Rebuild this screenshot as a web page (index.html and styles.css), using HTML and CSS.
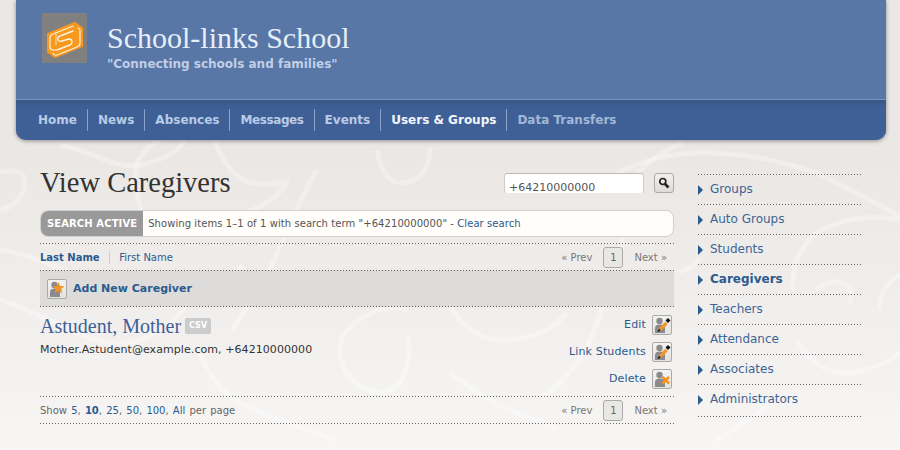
FILE: index.html
```html
<!DOCTYPE html>
<html lang="en">
    <head>
        <meta charset="UTF-8">
        <title>View Caregivers</title>
        <link rel="stylesheet" href="styles.css">
    </head>
    <body>
        <svg class="swirls" width="900" height="450" viewBox="0 0 900 450" fill="none" stroke="#fff" stroke-opacity="0.32" stroke-width="5">
            <path d="M0 172c15 -3 25 0 25 10c0 14 -12 26 -25 28"/>
            <path d="M60 145c30 5 55 25 80 20c25 -5 40 -15 45 -25"/>
            <path d="M160 140c-15 8 -25 20 -25 35c0 25 12 40 5 60"/>
            <path d="M215 142c10 25 25 42 45 42c15 0 28 -2 28 -4c-10 20 -30 30 -75 45"/>
            <path d="M317 170c-15 25 -30 60 -45 95c-15 30 -30 50 -40 65"/>
            <path d="M377 150c3 20 10 33 25 33c18 0 28 -15 28 -35"/>
            <path d="M0 250c40 5 80 30 133 50c40 15 85 5 110 -35"/>
            <path d="M0 300c40 12 70 35 105 42c30 5 60 -8 80 -35"/>
            <path d="M200 353c8 20 20 40 40 50c30 15 65 25 95 37"/>
            <path d="M408 310c-22 -8 -48 5 -65 25c-10 25 5 50 30 57c25 5 40 -20 35 -55"/>
            <path d="M450 307c15 22 30 33 55 33c28 0 50 -12 62 -27"/>
            <path d="M623 237c-10 35 -20 75 -33 103c-12 25 -30 45 -47 57"/>
            <path d="M450 373c20 15 40 30 67 40c15 5 30 10 40 17"/>
            <path d="M617 173c30 -15 65 -22 100 -20c35 2 70 10 100 20c30 15 60 30 83 44"/>
            <path d="M637 173c12 -12 28 -24 46 -30"/>
            <path d="M793 290c-2 -25 8 -45 24 -57c25 -15 55 -18 83 -13"/>
            <path d="M797 340c12 22 30 33 46 33c20 0 40 -8 57 -20"/>
            <path d="M817 290c8 -8 18 -10 26 -7c8 3 10 15 6 20"/>
            <path d="M880 310c-2 -15 8 -30 20 -35"/>
            <path d="M767 407c-18 12 -35 24 -50 33"/>
            <path d="M678 272c10 -2 18 -8 22 -14"/>
        </svg>
        <header class="banner">
            <div class="brand">
                <div class="logo">
                    <svg width="45" height="50" viewBox="0 0 45 50" fill="none" stroke-linejoin="round" stroke-linecap="round">
                        <rect width="45" height="50" fill="#808080" stroke="none"/>
                        <path d="M6 21l27 -11l7 5v18l-27 11l-7 -5z" fill="#f7981f" stroke="#f7981f" stroke-width="2"/>
                        <path d="M31 13l-20 8q-3 1 -3 4v9q0 3 3 3h3" stroke="#fff1da" stroke-width="1.2"/>
                        <path d="M36 15q2 0 2 3v12q0 3 -3 4l-20 8q-3 1 -4 -2" stroke="#fff1da" stroke-width="1.2"/>
                        <path d="M31 18l-13 5q-3 1 -2 4q1 2 4 1l7 -2q3 0 3 3q0 2 -2 3l-13 5" stroke="#fff1da" stroke-width="1.4"/>
                        <path d="M14 21v11" stroke="#fff1da" stroke-width="0.8"/>
                    </svg>
                </div>
                <div>
                    <h1 class="site-name">School-links School</h1>
                    <p class="motto">"Connecting schools and families"</p>
                </div>
            </div>
            <nav class="topnav">
                <a href="#">Home</a>
                <a href="#">News</a>
                <a href="#">Absences</a>
                <a href="#" class="tight">Messages</a>
                <a href="#">Events</a>
                <a href="#" class="current">Users &amp; Groups</a>
                <a href="#" class="dim">Data Transfers</a>
            </nav>
        </header>
        <div class="page">
            <main class="content">
                <div class="title-row">
                    <h2 class="page-title">View Caregivers</h2>
                    <form class="search">
                        <div class="search-input">+64210000000</div>
                        <div class="search-btn">
                            <svg width="12" height="12" viewBox="0 0 12 12" fill="none" stroke="#222">
                                <circle cx="4.800" cy="4.500" r="3" stroke-width="1.7"/>
                                <path d="M7 7l3.500 3.500" stroke-width="2.600"/>
                            </svg>
                        </div>
                    </form>
                </div>
                <div class="notice">
                    <span class="notice-label">SEARCH ACTIVE</span>
                    <span class="notice-text">Showing items 1–1 of 1 with search term "+64210000000" - <a href="#">Clear search</a></span>
                </div>
                <div class="listbar sortbar">
                    <div class="sort">
                        <a href="#" class="sort-on">Last Name</a>
                        <a href="#">First Name</a>
                    </div>
                    <div class="pager">
                        <span>« Prev</span>
                        <span class="page-num">1</span>
                        <span>Next »</span>
                    </div>
                </div>
                <div class="add-row">
                    <span class="icon-btn">
                        <svg width="18" height="18" viewBox="0 0 18 18">
                            <circle cx="6.500" cy="5" r="3.200" fill="#8b8b8b"/>
                            <path d="M2 17v-5c0 -2.500 2 -3.500 5 -3.500s5 1 5 3.500v5z" fill="#8b8b8b"/>
                            <path d="M10.500 2l1.700 4l4.300 .3l-3.300 2.800l1.100 4.200l-3.800 -2.300l-3.800 2.300l1.100 -4.200l-3.300 -2.800l4.300 -.3z" fill="#f29426"/>
                        </svg>
                    </span>
                    <a href="#">Add New Caregiver</a>
                </div>
                <article class="person">
                    <div class="person-main">
                        <div class="person-head">
                            <a href="#" class="person-name">Astudent, Mother</a>
                            <span class="csv">CSV</span>
                        </div>
                        <p class="person-info">Mother.Astudent@example.com, +64210000000</p>
                    </div>
                    <ul class="actions">
                        <li>
                            <a href="#">Edit</a>
                            <span class="icon-btn">
                                <svg width="18" height="18" viewBox="0 0 18 18">
                                    <circle cx="6.500" cy="5" r="3.200" fill="#8b8b8b"/>
                                    <path d="M2 17v-5c0 -2.500 2 -3.500 5 -3.500s5 1 5 3.500v5z" fill="#8b8b8b"/>
                                    <path d="M7 13.500l6.500 -6.500" stroke="#f29426" stroke-width="3.200"/>
                                    <path d="M5 15.500l2 -2" stroke="#111" stroke-width="1.500"/>
                                    <path d="M15 2l2.500 2.500l-2.500 2.500l-2.500 -2.500z" fill="#111"/>
                                </svg>
                            </span>
                        </li>
                        <li>
                            <a href="#">Link Students</a>
                            <span class="icon-btn">
                                <svg width="18" height="18" viewBox="0 0 18 18">
                                    <circle cx="6.500" cy="5" r="3.200" fill="#8b8b8b"/>
                                    <path d="M2 17v-5c0 -2.500 2 -3.500 5 -3.500s5 1 5 3.500v5z" fill="#8b8b8b"/>
                                    <path d="M7 13.500l6.500 -6.500" stroke="#f29426" stroke-width="3.200"/>
                                    <path d="M5 15.500l2 -2" stroke="#111" stroke-width="1.500"/>
                                    <path d="M15 2l2.500 2.500l-2.500 2.500l-2.500 -2.500z" fill="#111"/>
                                </svg>
                            </span>
                        </li>
                        <li>
                            <a href="#">Delete</a>
                            <span class="icon-btn">
                                <svg width="18" height="18" viewBox="0 0 18 18">
                                    <circle cx="6.500" cy="5" r="3.200" fill="#8b8b8b"/>
                                    <path d="M2 17v-5c0 -2.500 2 -3.500 5 -3.500s5 1 5 3.500v5z" fill="#8b8b8b"/>
                                    <path d="M9.500 7l6.500 6.500M16 7l-6.500 6.500" stroke="#f29426" stroke-width="2.600"/>
                                </svg>
                            </span>
                        </li>
                    </ul>
                </article>
                <div class="listbar footbar">
                    <div class="perpage">
                        Show <a href="#">5</a>, <a href="#" class="per-on">10</a>, <a href="#">25</a>, <a href="#">50</a>, <a href="#">100</a>, <a href="#">All</a> per page
                    </div>
                    <div class="pager">
                        <span>« Prev</span>
                        <span class="page-num">1</span>
                        <span>Next »</span>
                    </div>
                </div>
            </main>
            <aside class="sidebar">
                <a href="#">Groups</a>
                <a href="#">Auto Groups</a>
                <a href="#">Students</a>
                <a href="#" class="on">Caregivers</a>
                <a href="#">Teachers</a>
                <a href="#">Attendance</a>
                <a href="#">Associates</a>
                <a href="#" class="last">Administrators</a>
            </aside>
        </div>
    </body>
</html>
```

FILE: styles.css
```css
:root {
    --dots: linear-gradient(to right, #666 1px, transparent 1px);
}
body {
    margin: 0;
    height: 450px;
    overflow: hidden;
    position: relative;
    background: linear-gradient(#eae7e4 35%, #f7f6f5);
    font-family: "DejaVu Sans", sans-serif;
    font-size: 11px;
    color: #333;
}
a {
    color: #2b5a8e;
    text-decoration: none;
}
.swirls {
    position: absolute;
    left: 0;
    top: 0;
}
.banner {
    position: relative;
    margin: 0 14px 0 16px;
    height: 140px;
    border-radius: 0 0 10px 10px;
    box-shadow: 0 1px 4px rgba(0, 0, 0, 0.4);
    background: #5876a6;
    overflow: hidden;
}
.brand {
    display: flex;
    height: 100px;
    padding: 13px 0 0 26px;
    box-sizing: border-box;
    border-bottom: 1px solid #7a95bd;
}
.logo {
    margin-right: 20px;
    height: 50px;
}
.site-name {
    margin: 7px 0 0;
    font-family: "Liberation Serif", serif;
    font-weight: normal;
    font-size: 30px;
    line-height: 36px;
    color: #e6eef8;
}
.motto {
    margin: 0;
    font-weight: bold;
    font-size: 12px;
    line-height: 16px;
    color: #c0cfe6;
}
.topnav {
    display: flex;
    align-items: center;
    height: 40px;
    padding-left: 12px;
    box-sizing: border-box;
    background: linear-gradient(#375785, #3f6097 8px);
}
.topnav a {
    padding: 3px 10px;
    line-height: 16px;
    font-size: 12px;
    font-weight: bold;
    color: #b9cbe6;
    border-right: 1px solid #8ba3c7;
}
.topnav a:last-child {
    border-right: 0;
}
.topnav .tight {
    letter-spacing: -0.4px;
}
.topnav .current {
    color: #f2f6fb;
}
.topnav .dim {
    color: #a3b8d6;
}
.page {
    position: relative;
    display: flex;
    padding: 0 0 0 40px;
}
.content {
    width: 634px;
}
.title-row {
    display: flex;
    justify-content: space-between;
    height: 70px;
    box-sizing: border-box;
    padding-top: 33px;
}
.page-title {
    margin: 0;
    font-family: "Liberation Serif", serif;
    font-weight: normal;
    font-size: 28.5px;
    line-height: 20px;
    color: #333;
}
.search {
    display: flex;
    gap: 10px;
}
.search-input {
    width: 140px;
    height: 20px;
    box-sizing: border-box;
    padding: 6px 3px 0 4px;
    font-size: 11px;
    line-height: 16px;
    color: #555;
    background: #fff;
    border: 1px solid #ccc;
    border-bottom: 0;
    border-top-color: #bbb;
    border-radius: 3px;
    overflow: hidden;
}
.search-btn {
    display: flex;
    align-items: center;
    justify-content: center;
    width: 20px;
    height: 20px;
    box-sizing: border-box;
    background: linear-gradient(#f2f1ef, #dddbd8);
    border: 1px solid #aaa;
    border-radius: 3px;
}
.notice {
    display: flex;
    align-items: center;
    height: 27px;
    box-sizing: border-box;
    background: #fffefa;
    border: 1px solid #d0d0d0;
    border-radius: 8px;
    overflow: hidden;
}
.notice-label {
    align-self: stretch;
    display: flex;
    align-items: center;
    padding: 0 6px;
    font-weight: bold;
    font-size: 10px;
    letter-spacing: 0.1px;
    color: #fff;
    background: #999;
}
.notice-text {
    padding-left: 5px;
    font-size: 10px;
    letter-spacing: 0.07px;
    color: #555;
}
.listbar {
    display: flex;
    justify-content: space-between;
    align-items: center;
    background-image: var(--dots), var(--dots);
    background-size: 3px 1px;
    background-repeat: repeat-x;
    background-position: 0 0, 0 100%;
}
.sortbar {
    margin-top: 6px;
    height: 27px;
    box-sizing: border-box;
    padding-top: 2px;
    background-image: var(--dots);
    background-position: 0 0;
}
.sort a {
    display: inline-block;
    font-size: 10px;
    line-height: 13px;
    padding-right: 9px;
}
.sort .sort-on {
    font-weight: bold;
    border-right: 1px solid #ccc;
    margin-right: 6px;
}
.pager {
    display: flex;
    align-items: center;
    gap: 11px;
    padding-right: 7px;
    font-size: 10px;
    color: #777;
}
.page-num {
    width: 20px;
    height: 21px;
    box-sizing: border-box;
    text-align: center;
    line-height: 19px;
    color: #666;
    background: #e9e7e4;
    border: 1px solid #aaa;
    border-radius: 3px;
}
.add-row {
    display: flex;
    align-items: center;
    gap: 6px;
    height: 37px;
    box-sizing: border-box;
    padding-left: 7px;
    background-color: #dddcda;
    background-image: var(--dots), var(--dots);
    background-size: 3px 1px;
    background-repeat: repeat-x;
    background-position: 0 0, 0 100%;
}
.add-row a {
    font-weight: bold;
}
.icon-btn {
    display: flex;
    align-items: center;
    justify-content: center;
    width: 20px;
    height: 20px;
    box-sizing: border-box;
    background: linear-gradient(#f4f3f1, #e4e2df);
    border: 1px solid #aaa;
    border-radius: 2px;
}
.person {
    display: flex;
    justify-content: space-between;
    height: 89px;
    box-sizing: border-box;
}
.person-main {
    padding-top: 6px;
}
.person-head {
    display: flex;
    align-items: center;
    gap: 4px;
    height: 26px;
}
.person-name {
    font-family: "Liberation Serif", serif;
    font-size: 20px;
    color: #3f6097;
}
.csv {
    padding: 0 4px;
    font-size: 8px;
    font-weight: bold;
    line-height: 16px;
    color: #fff;
    background: #ccc;
    border-radius: 2px;
}
.person-info {
    margin: 3px 0 0;
    line-height: 16px;
    letter-spacing: 0.07px;
}
.actions {
    list-style: none;
    margin: 4px 0 0;
    padding: 0 2px 0 0;
}
.actions li {
    display: flex;
    justify-content: flex-end;
    align-items: center;
    gap: 6px;
    height: 27px;
    letter-spacing: 0.15px;
}
.footbar {
    height: 28px;
}
.perpage {
    font-size: 10px;
    word-spacing: 1px;
    color: #666;
}
.per-on {
    font-weight: bold;
}
.sidebar {
    width: 163px;
    margin: 34px 0 0 24px;
    padding-top: 1px;
    background: var(--dots) 0 0 / 3px 1px repeat-x;
}
.sidebar a {
    display: block;
    height: 30px;
    box-sizing: border-box;
    padding-left: 12px;
    line-height: 29px;
    font-size: 12px;
    color: #3d6594;
    background: var(--dots) 0 100% / 3px 1px repeat-x;
    position: relative;
}
.sidebar a::before {
    content: "";
    position: absolute;
    left: 0;
    top: 10px;
    border-left: 5px solid #2b5a8e;
    border-top: 5px solid transparent;
    border-bottom: 5px solid transparent;
}
.sidebar .on {
    font-weight: bold;
    color: #2b5a8e;
}
.sidebar .last {
    height: 32px;
}
```
